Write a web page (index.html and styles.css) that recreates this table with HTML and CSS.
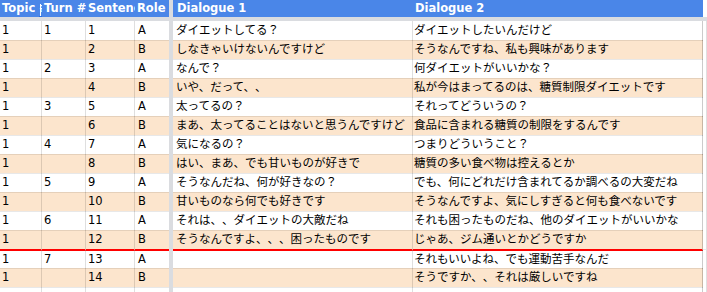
FILE: index.html
```html
<!DOCTYPE html>
<html lang="ja">
<head>
<meta charset="utf-8">
<title>Dialogue sheet</title>
<link rel="stylesheet" href="styles.css">
</head>
<body>
<div class="sheet">
  <div class="row head">
    <div class="c topic">Topic #<span class="handle"></span></div>
    <div class="c">Turn #</div>
    <div class="c">Sentence #</div>
    <div class="c role">Role</div>
    <div class="sep"></div>
    <div class="c d1">Dialogue 1</div>
    <div class="c d2">Dialogue 2</div>
    <div class="c rest"></div>
  </div>
  <div class="hsep"></div>

  <div class="row"><div class="c">1</div><div class="c">1</div><div class="c">1</div><div class="c role">A</div><div class="sep"></div><div class="c d1">ダイエットしてる？</div><div class="c d2">ダイエットしたいんだけど</div><div class="c rest"></div></div>
  <div class="row alt"><div class="c">1</div><div class="c"></div><div class="c">2</div><div class="c role">B</div><div class="sep"></div><div class="c d1">しなきゃいけないんですけど</div><div class="c d2">そうなんですね、私も興味があります</div><div class="c rest"></div></div>
  <div class="row"><div class="c">1</div><div class="c">2</div><div class="c">3</div><div class="c role">A</div><div class="sep"></div><div class="c d1">なんで？</div><div class="c d2">何ダイエットがいいかな？</div><div class="c rest"></div></div>
  <div class="row alt"><div class="c">1</div><div class="c"></div><div class="c">4</div><div class="c role">B</div><div class="sep"></div><div class="c d1">いや、だって、、</div><div class="c d2">私が今はまってるのは、糖質制限ダイエットです</div><div class="c rest"></div></div>
  <div class="row"><div class="c">1</div><div class="c">3</div><div class="c">5</div><div class="c role">A</div><div class="sep"></div><div class="c d1">太ってるの？</div><div class="c d2">それってどういうの？</div><div class="c rest"></div></div>
  <div class="row alt"><div class="c">1</div><div class="c"></div><div class="c">6</div><div class="c role">B</div><div class="sep"></div><div class="c d1">まあ、太ってることはないと思うんですけど</div><div class="c d2">食品に含まれる糖質の制限をするんです</div><div class="c rest"></div></div>
  <div class="row"><div class="c">1</div><div class="c">4</div><div class="c">7</div><div class="c role">A</div><div class="sep"></div><div class="c d1">気になるの？</div><div class="c d2">つまりどういうこと？</div><div class="c rest"></div></div>
  <div class="row alt"><div class="c">1</div><div class="c"></div><div class="c">8</div><div class="c role">B</div><div class="sep"></div><div class="c d1">はい、まあ、でも甘いものが好きで</div><div class="c d2">糖質の多い食べ物は控えるとか</div><div class="c rest"></div></div>
  <div class="row"><div class="c">1</div><div class="c">5</div><div class="c">9</div><div class="c role">A</div><div class="sep"></div><div class="c d1">そうなんだね、何が好きなの？</div><div class="c d2">でも、何にどれだけ含まれてるか調べるの大変だね</div><div class="c rest"></div></div>
  <div class="row alt"><div class="c">1</div><div class="c"></div><div class="c">10</div><div class="c role">B</div><div class="sep"></div><div class="c d1">甘いものなら何でも好きです</div><div class="c d2">そうなんですよ、気にしすぎると何も食べないです</div><div class="c rest"></div></div>
  <div class="row"><div class="c">1</div><div class="c">6</div><div class="c">11</div><div class="c role">A</div><div class="sep"></div><div class="c d1">それは、、ダイエットの大敵だね</div><div class="c d2">それも困ったものだね、他のダイエットがいいかな</div><div class="c rest"></div></div>
  <div class="row alt mark"><div class="c">1</div><div class="c"></div><div class="c">12</div><div class="c role">B</div><div class="sep"></div><div class="c d1">そうなんですよ、、、困ったものです</div><div class="c d2">じゃあ、ジム通いとかどうですか</div><div class="c rest"></div></div>
  <div class="row after"><div class="c">1</div><div class="c">7</div><div class="c">13</div><div class="c role">A</div><div class="sep"></div><div class="c d1"></div><div class="c d2">それもいいよね、でも運動苦手なんだ</div><div class="c rest"></div></div>
  <div class="row alt"><div class="c">1</div><div class="c"></div><div class="c">14</div><div class="c role">B</div><div class="sep"></div><div class="c d1"></div><div class="c d2">そうですか、、それは厳しいですね</div><div class="c rest"></div></div>
  <div class="row"><div class="c"></div><div class="c"></div><div class="c"></div><div class="c role"></div><div class="sep"></div><div class="c d1"></div><div class="c d2"></div><div class="c rest"></div></div>
</div>
</body>
</html>
```

FILE: styles.css
```css
html, body {
  margin: 0;
  padding: 0;
  background: #ffffff;
}

.sheet {
  width: 707px;
  height: 292px;
  overflow: hidden;
  font-family: "DejaVu Sans", "Noto Sans CJK JP", sans-serif;
  font-size: 11.5px;
  color: #000000;
  text-spacing-trim: space-all;
}

.row {
  display: grid;
  grid-template-columns: 42px 44px 49px 34px 4px 240px 290px 1fr;
  height: 19px;
  background: #ffffff;
}

.row.alt {
  background: #fce5cd;
}

.c {
  box-sizing: border-box;
  border-right: 1px solid rgba(0, 0, 0, 0.12);
  border-bottom: 1px solid rgba(0, 0, 0, 0.09);
  padding: 0 0 0 2px;
  white-space: nowrap;
  overflow: hidden;
  line-height: 19px;
}

.c.role {
  border-right: none;
  padding-left: 3px;
}

.c.d1, .c.d2 {
  padding-left: 3px;
  overflow: visible;
}

.c.d2 {
  padding-left: 1px;
  border-right-color: rgba(0, 0, 0, 0.2);
}

.c.rest {
  background: #ffffff;
}

.sep {
  background: #dadce0;
}

.hsep {
  height: 4px;
  background: #dadce0;
}

.row.head {
  height: 17px;
  background: #4a86e8;
  color: #ffffff;
  font-weight: bold;
}

.row.head .c {
  border: none;
  line-height: 17px;
  padding-left: 2px;
  overflow: hidden;
}

.row.head .c.d1 {
  padding-left: 4px;
}

.row.head .c.d2 {
  padding-left: 2px;
}

.row.head .c.rest {
  background: #ffffff;
}

.row.head .topic {
  position: relative;
}

.handle {
  position: absolute;
  left: 40px;
  top: 4px;
  width: 1px;
  height: 13px;
  background: #ffffff;
}

.handle::after {
  content: "";
  position: absolute;
  left: -1px;
  top: 12px;
  width: 5px;
  height: 2px;
  background: #2a6fe0;
}

.row.mark {
  height: 20px;
}

.row.mark .c {
  border-bottom: 2px solid #ff0000;
}

.row.mark .c.rest {
  border-bottom-color: rgba(0, 0, 0, 0.09);
}

.row.after {
  height: 18px;
}

.row.after .c {
  line-height: 18px;
}
```
